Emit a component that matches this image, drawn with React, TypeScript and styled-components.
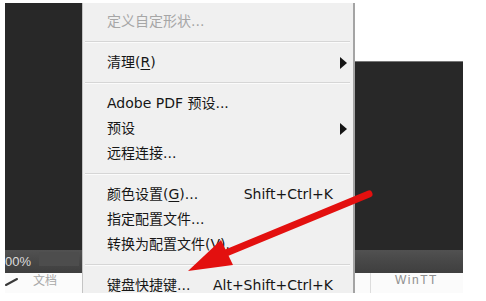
import React from "react";
import styled, { createGlobalStyle } from "styled-components";

const Global = createGlobalStyle`
  html, body { margin: 0; padding: 0; background: #ffffff; }
  body { width: 486px; height: 301px; overflow: hidden; }
`;

const Page = styled.div`
  position: relative;
  width: 486px;
  height: 301px;
  box-sizing: border-box;
  padding: 3px 23px 8px 5px;
  background: #ffffff;
`;

const Screen = styled.div`
  position: relative;
  width: 458px;
  height: 290px;
  display: flex;
  flex-direction: column;
  overflow: hidden;
  background: #282828;
  font-family: "DejaVu Sans", "Noto Sans CJK SC", sans-serif;
`;

const Workspace = styled.div`
  flex: 1;
  display: flex;
  justify-content: flex-end;
`;

const RightPanel = styled.div`
  width: 108px;
  display: flex;
  flex-direction: column;
`;

const OptionsArea = styled.div`
  height: 58px;
  background: #ffffff;
  border-bottom: 1px solid #767676;
`;

const StatusBar = styled.div`
  height: 23px;
  display: flex;
  align-items: center;
  background: linear-gradient(#515151, #474747 50%, #3f3f3f);
  color: #dcdcdc;
  font-size: 12px;
`;

const ZoomText = styled.span`
  width: 34px;
  font-family: "Liberation Sans", sans-serif;
  font-size: 13px;
`;

const InfoBox = styled.span`
  width: 40px;
  height: 14px;
  background: #4d4d4d;
  margin-top: -6px;
`;

const TabRow = styled.div`
  height: 20px;
  display: flex;
  background: #fbfbfb;
`;

const TabIcon = styled.svg`
  width: 16px;
  height: 14px;
  margin-top: 2px;
`;

const TabLabel = styled.span`
  font-family: "Noto Sans CJK SC", sans-serif;
  font-size: 12px;
  line-height: 14px;
  color: #a8a8a8;
  margin-left: 12px;
`;

const RightTab = styled.div`
  margin-left: auto;
  width: 108px;
  display: flex;
`;

const TabDivider = styled.div`
  width: 1px;
  margin-left: 15px;
  background: #dddddd;
`;

const RightTabLabel = styled.span`
  font-family: "Liberation Sans", sans-serif;
  font-size: 12px;
  line-height: 14px;
  color: #8e8e8e;
  margin-left: 24px;
  letter-spacing: 1.5px;
`;

const Menu = styled.div`
  position: absolute;
  left: 77px;
  top: 0;
  bottom: 0;
  width: 273px;
  box-sizing: border-box;
  padding-top: 6px;
  background: #f0f0f0;
  border-left: 1px solid #c4c4c4;
  border-right: 2px solid #a4a4a4;
  display: flex;
  flex-direction: column;
`;

const Item = styled.div<{ $disabled?: boolean }>`
  flex: none;
  height: 25px;
  display: flex;
  align-items: center;
  padding: 0 6px 0 24px;
  font-size: 14px;
  line-height: 25px;
  white-space: nowrap;
  color: ${(p) => (p.$disabled ? "#a6a6a6" : "#161616")};
`;

const Label = styled.span`
  flex: 1;
`;

const Shortcut = styled.span`
  text-align: right;
`;

const SubSlot = styled.span`
  width: 14px;
  display: flex;
  justify-content: flex-end;
  align-items: center;
`;

const Separator = styled.div`
  flex: none;
  height: 16px;
  display: flex;
  align-items: center;
  padding: 0 3px 0 2px;
  &::after {
    content: "";
    flex: 1;
    height: 1px;
    background: #d6d6d6;
    border-bottom: 1px solid #fbfbfb;
  }
`;

const Key = styled.u`
  text-decoration-thickness: 1px;
  text-underline-offset: 2px;
`;

const ArrowOverlay = styled.svg`
  position: absolute;
  left: 0;
  top: 0;
  width: 486px;
  height: 301px;
  pointer-events: none;
`;

const SubArrow = () => (
  <svg width="7" height="12" viewBox="0 0 7 12">
    <path d="M0 0 L7 6 L0 12 Z" fill="#151515" />
  </svg>
);

type Entry =
  | { kind: "sep" }
  | {
      kind: "item";
      label: React.ReactNode;
      shortcut?: string;
      sub?: boolean;
      disabled?: boolean;
    };

const entries: Entry[] = [
  { kind: "item", label: "定义自定形状...", disabled: true },
  { kind: "sep" },
  { kind: "item", label: <>清理(<Key>R</Key>)</>, sub: true },
  { kind: "sep" },
  { kind: "item", label: "Adobe PDF 预设..." },
  { kind: "item", label: "预设", sub: true },
  { kind: "item", label: "远程连接..." },
  { kind: "sep" },
  { kind: "item", label: <>颜色设置(<Key>G</Key>)...</>, shortcut: "Shift+Ctrl+K" },
  { kind: "item", label: "指定配置文件..." },
  { kind: "item", label: <>转换为配置文件(<Key>V</Key>)...</> },
  { kind: "sep" },
  { kind: "item", label: "键盘快捷键...", shortcut: "Alt+Shift+Ctrl+K" },
];

export default function App() {
  return (
    <Page>
      <Global />
      <Screen>
        <Workspace>
          <RightPanel>
            <OptionsArea />
          </RightPanel>
        </Workspace>
        <StatusBar>
          <ZoomText>00%</ZoomText>
          <InfoBox />
        </StatusBar>
        <TabRow>
          <TabIcon viewBox="0 0 16 14">
            <path d="M1 10 L12 4" stroke="#3a3a3a" strokeWidth="2" strokeLinecap="round" />
          </TabIcon>
          <TabLabel>文档</TabLabel>
          <RightTab>
            <TabDivider />
            <RightTabLabel>WinTT</RightTabLabel>
          </RightTab>
        </TabRow>
        <Menu>
          {entries.map((e, i) =>
            e.kind === "sep" ? (
              <Separator key={i} />
            ) : (
              <Item key={i} $disabled={e.disabled}>
                <Label>{e.label}</Label>
                {e.shortcut && <Shortcut>{e.shortcut}</Shortcut>}
                <SubSlot>{e.sub && <SubArrow />}</SubSlot>
              </Item>
            )
          )}
        </Menu>
      </Screen>
      <ArrowOverlay viewBox="0 0 486 301">
        <line x1="369" y1="194" x2="226" y2="253" stroke="#e3100f" strokeWidth="7" strokeLinecap="round" />
        <polygon points="188,271 233,265 221,240" fill="#e3100f" />
      </ArrowOverlay>
    </Page>
  );
}
